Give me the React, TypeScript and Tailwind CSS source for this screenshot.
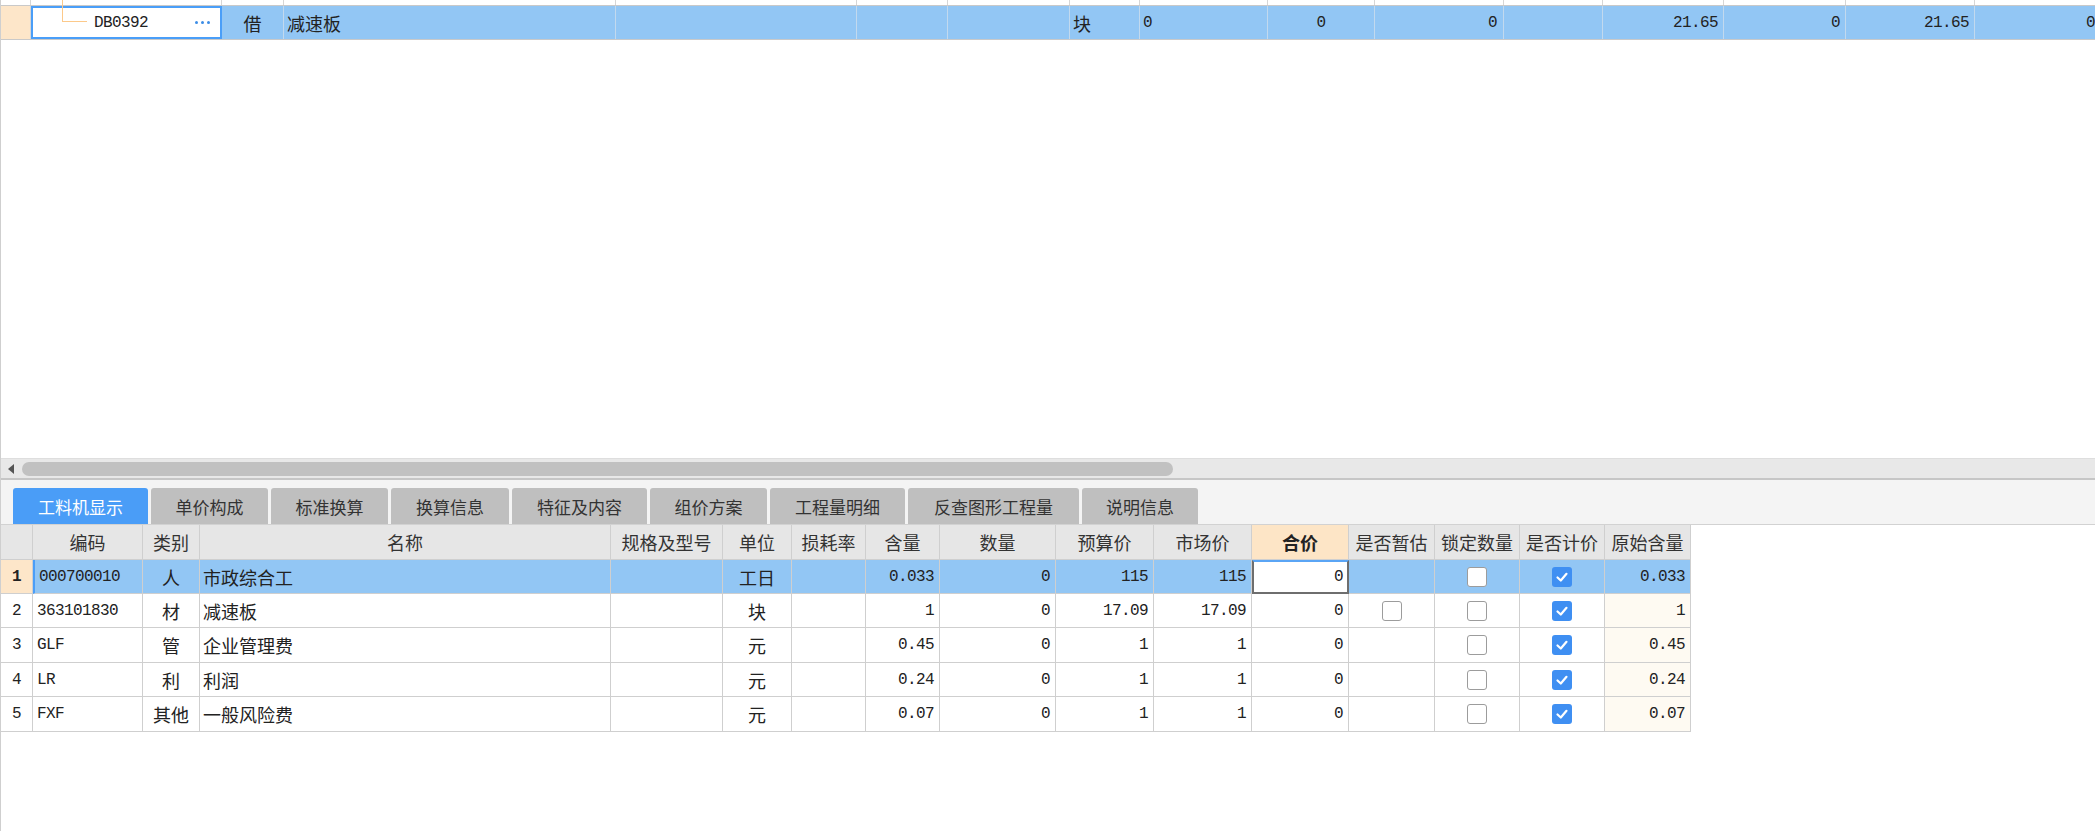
import React from "react";

const mono = "font-['Liberation_Mono','Noto_Sans_CJK_SC',monospace] text-[16px] tracking-[-0.6px]";
const cjk = "font-['Noto_Sans_CJK_SC','Noto_Sans',sans-serif] text-[18px] leading-none";

const topWidths = [
  "w-[30px]",
  "w-[191px]",
  "w-[62px]",
  "w-[332px]",
  "w-[241px]",
  "w-[91px]",
  "w-[122px]",
  "w-[70px]",
  "w-[128px]",
  "w-[107px]",
  "w-[129px]",
  "w-[99px]",
  "w-[121px]",
  "w-[122px]",
  "w-[129px]",
  "w-[140px]",
];

const tabs = [
  { label: "工料机显示", w: "w-[135px]", active: true },
  { label: "单价构成", w: "w-[117px]" },
  { label: "标准换算", w: "w-[117px]" },
  { label: "换算信息", w: "w-[118px]" },
  { label: "特征及内容", w: "w-[135px]" },
  { label: "组价方案", w: "w-[117px]" },
  { label: "工程量明细", w: "w-[135px]" },
  { label: "反查图形工程量", w: "w-[171px]" },
  { label: "说明信息", w: "w-[116px]" },
];

const headers = [
  "",
  "编码",
  "类别",
  "名称",
  "规格及型号",
  "单位",
  "损耗率",
  "含量",
  "数量",
  "预算价",
  "市场价",
  "合价",
  "是否暂估",
  "锁定数量",
  "是否计价",
  "原始含量",
];

// row heights alternate a little in the original (34/35px)
const rows = [
  { n: "1", h: "h-[34px]", code: "000700010", type: "人", name: "市政综合工", unit: "工日", qty: "0.033", num: "0", budget: "115", market: "115", total: "0", est: false, orig: "0.033" },
  { n: "2", h: "h-[34px]", code: "363101830", type: "材", name: "减速板", unit: "块", qty: "1", num: "0", budget: "17.09", market: "17.09", total: "0", est: true, orig: "1" },
  { n: "3", h: "h-[35px]", code: "GLF", type: "管", name: "企业管理费", unit: "元", qty: "0.45", num: "0", budget: "1", market: "1", total: "0", est: false, orig: "0.45" },
  { n: "4", h: "h-[34px]", code: "LR", type: "利", name: "利润", unit: "元", qty: "0.24", num: "0", budget: "1", market: "1", total: "0", est: false, orig: "0.24" },
  { n: "5", h: "h-[35px]", code: "FXF", type: "其他", name: "一般风险费", unit: "元", qty: "0.07", num: "0", budget: "1", market: "1", total: "0", est: false, orig: "0.07" },
];

function Box({ checked }: { checked?: boolean }) {
  if (checked) {
    return (
      <span className="flex h-[20px] w-[20px] items-center justify-center rounded-[3px] bg-[#3f8ff2]">
        <svg width="14" height="14" viewBox="0 0 14 14">
          <polyline points="2.5,7.5 5.8,10.5 11.5,3.8" fill="none" stroke="white" strokeWidth="2.2" strokeLinecap="round" strokeLinejoin="round" />
        </svg>
      </span>
    );
  }
  return <span className="h-[20px] w-[20px] rounded-[3px] border border-[#9c9c9c] bg-white" />;
}

function TopPane() {
  return (
    <div className="relative h-[458px] flex-none">
      {/* tail of the previous row */}
      <div className="flex h-[5px]">
        {topWidths.map((w, i) => (
          <div key={i} className={`${w} shrink-0 border-r border-[#d6d6d6]`} />
        ))}
      </div>
      <div className={`flex h-[35px] border-y border-[#c9c9c9] bg-[#92c6f4] text-[#222] ${cjk}`}>
        <div className="w-[30px] shrink-0 border-r border-[#d6d6d6] bg-[#fde6c9]" />
        <div className="flex w-[191px] shrink-0 items-center border-2 border-[#4a9ef8] bg-white pl-[61px] pr-[10px]">
          <span className={mono}>DB0392</span>
          <span className="ml-auto flex gap-[3px]">
            <span className="h-[3px] w-[3px] rounded-full bg-[#3c8de6]" />
            <span className="h-[3px] w-[3px] rounded-full bg-[#3c8de6]" />
            <span className="h-[3px] w-[3px] rounded-full bg-[#3c8de6]" />
          </span>
        </div>
        <div className="flex w-[62px] shrink-0 items-center justify-center border-r border-[#c2d9ee]">借</div>
        <div className="flex w-[332px] shrink-0 items-center border-r border-[#c2d9ee] pl-[3px]">减速板</div>
        <div className="w-[241px] shrink-0 border-r border-[#c2d9ee]" />
        <div className="w-[91px] shrink-0 border-r border-[#c2d9ee]" />
        <div className="w-[122px] shrink-0 border-r border-[#c2d9ee]" />
        <div className="flex w-[70px] shrink-0 items-center border-r border-[#c2d9ee] pl-[3px]">块</div>
        <div className={`flex w-[128px] shrink-0 items-center border-r border-[#c2d9ee] pl-[3px] ${mono}`}>0</div>
        <div className={`flex w-[107px] shrink-0 items-center justify-center border-r border-[#c2d9ee] ${mono}`}>0</div>
        <div className={`flex w-[129px] shrink-0 items-center justify-end border-r border-[#c2d9ee] pr-[6px] ${mono}`}>0</div>
        <div className="w-[99px] shrink-0 border-r border-[#c2d9ee]" />
        <div className={`flex w-[121px] shrink-0 items-center justify-end border-r border-[#c2d9ee] pr-[5px] ${mono}`}>21.65</div>
        <div className={`flex w-[122px] shrink-0 items-center justify-end border-r border-[#c2d9ee] pr-[5px] ${mono}`}>0</div>
        <div className={`flex w-[129px] shrink-0 items-center justify-end border-r border-[#c2d9ee] pr-[5px] ${mono}`}>21.65</div>
        <div className={`flex w-[140px] shrink-0 items-center pl-[111px] ${mono}`}>0</div>
      </div>
      {/* tree connector */}
      <div className="absolute left-[61px] top-0 h-[22px] w-[25px] border-b border-l border-[#fcc98a]" />
    </div>
  );
}

function ScrollBar() {
  return (
    <div className="flex h-[22px] flex-none items-center border-t border-[#dedede] border-b-2 border-b-[#c6c6c6] bg-[#e8e8e8]">
      <span className="ml-[7px] h-0 w-0 border-y-[5px] border-r-[6px] border-y-transparent border-r-[#555]" />
      <span className="ml-[8px] h-[14px] w-[1151px] rounded-full bg-[#c1c1c1]" />
    </div>
  );
}

function TabBar() {
  return (
    <div className={`flex h-[45px] flex-none items-end gap-[3px] border-b border-[#d2d2d2] bg-[#f4f4f4] pl-[12px] ${cjk}`}>
      {tabs.map((t) => (
        <div
          key={t.label}
          className={`${t.w} flex h-[36px] items-center justify-center rounded-t-[3px] text-[17px] ${
            t.active ? "bg-[#4a9df7] text-white" : "bg-[#bfbfbf] text-[#333]"
          }`}
        >
          {t.label}
        </div>
      ))}
    </div>
  );
}

function Grid() {
  const cell = "flex items-center border-b border-r border-[#cfcfcf]";
  return (
    <div className="grid w-[1690px] grid-cols-[32px_110px_57px_411px_112px_69px_74px_74px_116px_98px_98px_97px_86px_85px_85px_86px] text-[#222]">
      {headers.map((h, i) => (
        <div
          key={i}
          className={`flex h-[35px] items-center justify-center border-b border-r border-[#cfcfcf] ${cjk} ${
            i === 11 ? "bg-[#fde5c6] font-bold text-[#222]" : "bg-[#e6e6e6] text-[#333]"
          }`}
        >
          {h}
        </div>
      ))}
      {rows.map((r, i) => {
        const sel = i === 0;
        const bg = sel ? "bg-[#92c6f4]" : "bg-white";
        const c = `${cell} ${r.h}`;
        return (
          <React.Fragment key={r.n}>
            <div className={`${c} justify-center ${mono} ${sel ? "bg-[#fde6c9] font-bold" : "bg-white"}`}>{r.n}</div>
            <div className={`${c} ${bg} pl-[4px] ${mono} ${sel ? "border-l-2 border-l-[#4a9ef8] pl-[2px]" : ""}`}>{r.code}</div>
            <div className={`${c} ${bg} justify-center ${cjk}`}>{r.type}</div>
            <div className={`${c} ${bg} pl-[3px] ${cjk}`}>{r.name}</div>
            <div className={`${c} ${bg}`} />
            <div className={`${c} ${bg} justify-center ${cjk}`}>{r.unit}</div>
            <div className={`${c} ${bg}`} />
            <div className={`${c} ${bg} justify-end pr-[5px] ${mono}`}>{r.qty}</div>
            <div className={`${c} ${bg} justify-end pr-[5px] ${mono}`}>{r.num}</div>
            <div className={`${c} ${bg} justify-end pr-[5px] ${mono}`}>{r.budget}</div>
            <div className={`${c} ${bg} justify-end pr-[5px] ${mono}`}>{r.market}</div>
            {sel ? (
              <div className={`flex ${r.h} items-center justify-end border-2 border-[#6e6e6e] border-t-[#5aa5f5] bg-white pr-[4px] ${mono}`}>
                {r.total}
              </div>
            ) : (
              <div className={`${c} bg-white justify-end pr-[5px] ${mono}`}>{r.total}</div>
            )}
            <div className={`${c} ${bg} justify-center`}>{r.est && <Box />}</div>
            <div className={`${c} ${bg} justify-center`}>
              <Box />
            </div>
            <div className={`${c} ${bg} justify-center`}>
              <Box checked />
            </div>
            <div className={`${c} ${sel ? "bg-[#92c6f4]" : "bg-[#fefaf2]"} justify-end pr-[5px] ${mono}`}>{r.orig}</div>
          </React.Fragment>
        );
      })}
    </div>
  );
}

export default function App() {
  return (
    <div className="flex h-[831px] w-[2095px] flex-col overflow-hidden border-l border-[#cfcfcf] bg-white">
      <TopPane />
      <ScrollBar />
      <TabBar />
      <Grid />
    </div>
  );
}
